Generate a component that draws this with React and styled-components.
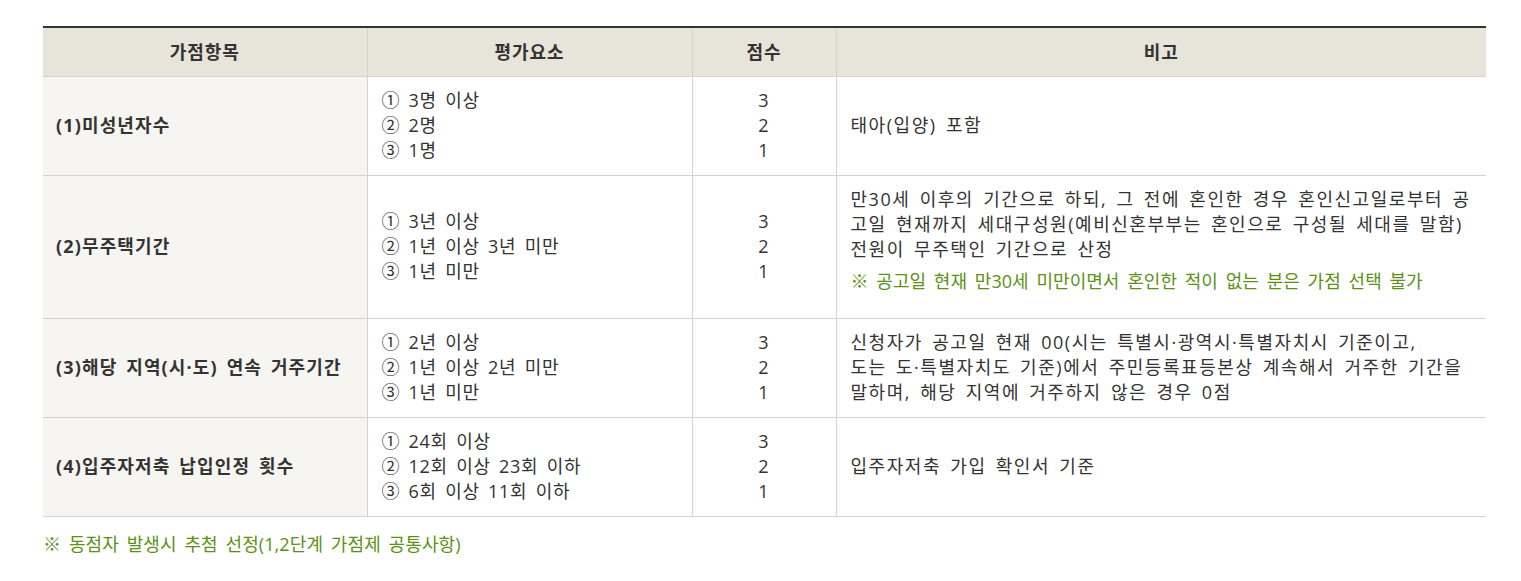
import React from "react";
import styled, { createGlobalStyle } from "styled-components";

const rows = [
  {
    title: "(1)미성년자수",
    items: ["① 3명 이상", "② 2명", "③ 1명"],
    scores: [3, 2, 1],
    remarks: ["태아(입양) 포함"],
  },
  {
    title: "(2)무주택기간",
    items: ["① 3년 이상", "② 1년 이상 3년 미만", "③ 1년 미만"],
    scores: [3, 2, 1],
    remarks: [
      "만30세 이후의 기간으로 하되, 그 전에 혼인한 경우 혼인신고일로부터 공",
      "고일 현재까지 세대구성원(예비신혼부부는 혼인으로 구성될 세대를 말함)",
      "전원이 무주택인 기간으로 산정",
    ],
    note: "※ 공고일 현재 만30세 미만이면서 혼인한 적이 없는 분은 가점 선택 불가",
  },
  {
    title: "(3)해당 지역(시·도) 연속 거주기간",
    items: ["① 2년 이상", "② 1년 이상 2년 미만", "③ 1년 미만"],
    scores: [3, 2, 1],
    remarks: [
      "신청자가 공고일 현재 00(시는 특별시·광역시·특별자치시 기준이고,",
      "도는 도·특별자치도 기준)에서 주민등록표등본상 계속해서 거주한 기간을",
      "말하며, 해당 지역에 거주하지 않은 경우 0점",
    ],
  },
  {
    title: "(4)입주자저축 납입인정 횟수",
    items: ["① 24회 이상", "② 12회 이상 23회 이하", "③ 6회 이상 11회 이하"],
    scores: [3, 2, 1],
    remarks: ["입주자저축 가입 확인서 기준"],
  },
];

export default function App() {
  return (
    <>
      <GlobalStyle />
      <Page>
        <Table>
          <colgroup>
            <col style={{ width: 324 }} />
            <col style={{ width: 325 }} />
            <col style={{ width: 144 }} />
            <col />
          </colgroup>
          <thead>
            <tr>
              <HeadCell>가점항목</HeadCell>
              <HeadCell>평가요소</HeadCell>
              <HeadCell>점수</HeadCell>
              <HeadCell>비고</HeadCell>
            </tr>
          </thead>
          <tbody>
            {rows.map((row) => (
              <tr key={row.title}>
                <TitleCell spacing={1.15}>{row.title}</TitleCell>
                <Cell spacing={0.7}>
                  {row.items.map((item) => (
                    <Line key={item}>{item}</Line>
                  ))}
                </Cell>
                <Cell center>
                  {row.scores.map((s) => (
                    <Line key={s}>{s}</Line>
                  ))}
                </Cell>
                <Cell spacing={1.55}>
                  {row.remarks.map((r) => (
                    <Line key={r}>{r}</Line>
                  ))}
                  {row.note && <Note>{row.note}</Note>}
                </Cell>
              </tr>
            ))}
          </tbody>
        </Table>
        <Footnote>※ 동점자 발생시 추첨 선정(1,2단계 가점제 공통사항)</Footnote>
      </Page>
    </>
  );
}

const GlobalStyle = createGlobalStyle`
  body {
    margin: 0;
    background: #fff;
    font-family: "Open Sans", "Noto Sans CJK KR", sans-serif;
    color: #333;
  }
`;

const Page = styled.div`
  padding: 26px 35px 0 43px;
`;

const Table = styled.table`
  width: 1443px;
  border-collapse: collapse;
  table-layout: fixed;
  border-top: 2px solid #333;
  font-size: 18px;
  line-height: 25px;
  letter-spacing: 1px;
  word-spacing: 3px;
`;

const HeadCell = styled.th`
  height: 48px;
  padding: 0 14px;
  background: #e7e4d9;
  border: 1px solid #d3d3d3;
  border-top: none;
  font-weight: 700;
  text-align: center;
  vertical-align: middle;
  &:first-child {
    border-left: none;
  }
  &:last-child {
    border-right: none;
  }
`;

const Cell = styled.td`
  padding: 11px 14px 12px;
  border: 1px solid #d3d3d3;
  text-align: ${(p) => (p.center ? "center" : "left")};
  vertical-align: middle;
  letter-spacing: ${(p) => (p.spacing ? `${p.spacing}px` : "inherit")};
  &:last-child {
    border-right: none;
  }
`;

const TitleCell = styled(Cell)`
  padding-left: 13px;
  background: #f6f5f1;
  font-weight: 700;
  border-left: none;
`;

const Line = styled.div`
  white-space: nowrap;
`;

const Note = styled.div`
  margin: 7px 0 12px;
  color: #5a9216;
  letter-spacing: 0.05px;
  white-space: nowrap;
`;

const Footnote = styled.p`
  margin: 15px 0 0;
  font-size: 18px;
  line-height: 25px;
  letter-spacing: 0.1px;
  word-spacing: 3px;
  color: #5a9216;
`;
